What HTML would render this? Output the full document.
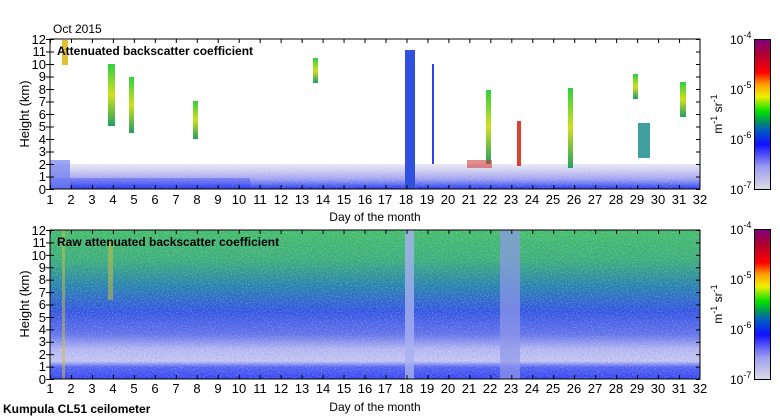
<!DOCTYPE html>
<html><head><meta charset="utf-8"><style>
html,body{margin:0;padding:0;background:#fff;}
svg{display:block;font-family:"Liberation Sans",sans-serif;}
</style></head><body>
<svg width="780" height="420" viewBox="0 0 780 420" xmlns="http://www.w3.org/2000/svg">
<defs>
<linearGradient id="cb" x1="0" y1="1" x2="0" y2="0">
<stop offset="0" stop-color="#dcdce6"/><stop offset="0.15" stop-color="#9c9cf0"/>
<stop offset="0.3" stop-color="#1010ff"/><stop offset="0.4" stop-color="#0060c0"/>
<stop offset="0.45" stop-color="#009060"/><stop offset="0.52" stop-color="#00e000"/>
<stop offset="0.62" stop-color="#f0f000"/><stop offset="0.7" stop-color="#ffa000"/>
<stop offset="0.78" stop-color="#ff0000"/><stop offset="0.9" stop-color="#b00030"/>
<stop offset="1" stop-color="#800080"/></linearGradient>
<linearGradient id="band" x1="0" y1="0" x2="0" y2="1">
<stop offset="0" stop-color="#e8e8f4"/><stop offset="0.3" stop-color="#c8c8f0"/>
<stop offset="0.6" stop-color="#a0a0f0"/><stop offset="0.8" stop-color="#6070f0"/><stop offset="1" stop-color="#2030f0"/></linearGradient>
<linearGradient id="raw" x1="0" y1="0" x2="0" y2="1">
<stop offset="0" stop-color="#40c060"/><stop offset="0.2" stop-color="#38b070"/>
<stop offset="0.38" stop-color="#2080a8"/><stop offset="0.55" stop-color="#3050e0"/>
<stop offset="0.7" stop-color="#6070e8"/><stop offset="0.8" stop-color="#b8b8f0"/>
<stop offset="0.88" stop-color="#c8c8f0"/><stop offset="0.92" stop-color="#5060f0"/>
<stop offset="1" stop-color="#3040f0"/></linearGradient>
<linearGradient id="cl" x1="0" y1="0" x2="0" y2="1">
<stop offset="0" stop-color="#30d040"/><stop offset="0.5" stop-color="#d0e020"/><stop offset="1" stop-color="#20a060"/></linearGradient>
<pattern id="xt" x="50" y="0" width="20.968" height="420" patternUnits="userSpaceOnUse"><rect x="0" y="0" width="1" height="420" fill="#000"/></pattern>
<pattern id="yt" x="0" y="39" width="780" height="12.5" patternUnits="userSpaceOnUse"><rect x="0" y="0" width="780" height="1" fill="#000"/></pattern>
<pattern id="yt2" x="0" y="230" width="780" height="12.42" patternUnits="userSpaceOnUse"><rect x="0" y="0" width="780" height="1" fill="#000"/></pattern>
<filter id="nz" x="0" y="0" width="1" height="1"><feTurbulence type="fractalNoise" baseFrequency="0.8" numOctaves="1" seed="3"/><feColorMatrix values="0 0 0 0 1  0 0 0 0 1  0 0 0 0 1  0 0 0 2 -0.9"/></filter>
<filter id="nz2" x="0" y="0" width="1" height="1"><feTurbulence type="fractalNoise" baseFrequency="0.7" numOctaves="1" seed="9"/><feColorMatrix values="0 0 0 0 0.1  0 0 0 0 0.2  0 0 0 0 1  0 0 0 2 -0.9"/></filter>
</defs>

<text x="53" y="33" font-size="12">Oct 2015</text>

<!-- TOP PLOT -->
<rect x="50" y="164" width="650" height="25" fill="url(#band)"/>
<rect x="50" y="164" width="650" height="25" filter="url(#nz)" opacity="0.4"/>
<rect x="50" y="178" width="200" height="11" fill="#3040f0" opacity="0.35"/>
<rect x="50" y="160" width="20" height="29" fill="#7080f0" opacity="0.7"/>
<rect x="108" y="64" width="7" height="62" fill="url(#cl)"/>
<rect x="129" y="77" width="5" height="56" fill="url(#cl)"/>
<rect x="193" y="101" width="5" height="38" fill="url(#cl)"/>
<rect x="313" y="58" width="5" height="25" fill="url(#cl)"/>
<rect x="62" y="40" width="6" height="25" fill="#e0c030"/>
<rect x="405" y="50" width="10" height="139" fill="#3050e0"/>
<rect x="432" y="64" width="2" height="100" fill="#3040f0"/>
<rect x="486" y="90" width="5" height="74" fill="url(#cl)"/>
<rect x="517" y="121" width="4" height="45" fill="#e04030"/>
<rect x="568" y="88" width="5" height="80" fill="url(#cl)"/>
<rect x="633" y="74" width="5" height="25" fill="url(#cl)"/>
<rect x="638" y="123" width="12" height="35" fill="#40a0a0"/>
<rect x="680" y="82" width="6" height="35" fill="url(#cl)"/>
<rect x="467" y="160" width="25" height="8" fill="#d04040" opacity="0.6"/>
<rect x="50" y="39" width="650" height="150" fill="none" stroke="#000" stroke-width="1"/>
<rect x="50" y="39" width="650" height="4" fill="url(#xt)"/>
<rect x="50" y="185" width="650" height="4" fill="url(#xt)"/>
<rect x="46" y="39" width="8" height="151" fill="url(#yt)"/>
<rect x="696" y="39" width="4" height="151" fill="url(#yt)"/>
<text x="57" y="55" font-size="12" font-weight="bold">Attenuated backscatter coefficient</text>

<!-- BOTTOM PLOT -->
<rect x="50" y="230" width="650" height="149" fill="url(#raw)"/>
<rect x="50" y="230" width="650" height="149" filter="url(#nz)" opacity="0.45"/>
<rect x="50" y="230" width="650" height="149" filter="url(#nz2)" opacity="0.45"/>
<rect x="405" y="230" width="9" height="149" fill="#a8b0f0" opacity="0.8"/>
<rect x="500" y="230" width="20" height="149" fill="#9098e8" opacity="0.7"/>
<rect x="108" y="240" width="5" height="60" fill="#d0c040" opacity="0.5"/>
<rect x="62" y="230" width="3" height="149" fill="#d0c040" opacity="0.5"/>
<rect x="50" y="230" width="650" height="149" fill="none" stroke="#000"/>
<rect x="50" y="230" width="650" height="4" fill="url(#xt)"/>
<rect x="50" y="375" width="650" height="4" fill="url(#xt)"/>
<rect x="46" y="230" width="8" height="150" fill="url(#yt2)"/>
<rect x="696" y="230" width="4" height="150" fill="url(#yt2)"/>
<text x="57" y="246" font-size="12" font-weight="bold">Raw attenuated backscatter coefficient</text>

<!-- y labels -->
<g font-size="13" text-anchor="end">
<text x="46" y="44">12</text><text x="46" y="56">11</text><text x="46" y="69">10</text><text x="46" y="81">9</text><text x="46" y="94">8</text><text x="46" y="106">7</text><text x="46" y="119">6</text><text x="46" y="131">5</text><text x="46" y="144">4</text><text x="46" y="156">3</text><text x="46" y="169">2</text><text x="46" y="181">1</text><text x="46" y="194">0</text>
<text x="46" y="235">12</text><text x="46" y="247">11</text><text x="46" y="260">10</text><text x="46" y="272">9</text><text x="46" y="284">8</text><text x="46" y="297">7</text><text x="46" y="309">6</text><text x="46" y="322">5</text><text x="46" y="334">4</text><text x="46" y="346">3</text><text x="46" y="359">2</text><text x="46" y="371">1</text><text x="46" y="384">0</text>
</g>
<text font-size="13" transform="translate(29,114) rotate(-90)" text-anchor="middle">Height (km)</text>
<text font-size="13" transform="translate(29,304) rotate(-90)" text-anchor="middle">Height (km)</text>

<!-- x labels -->
<g font-size="13" text-anchor="middle">
<text x="50" y="204">1</text><text x="71" y="204">2</text><text x="92" y="204">3</text><text x="113" y="204">4</text><text x="134" y="204">5</text><text x="155" y="204">6</text><text x="176" y="204">7</text><text x="197" y="204">8</text><text x="218" y="204">9</text><text x="239" y="204">10</text><text x="260" y="204">11</text><text x="281" y="204">12</text><text x="302" y="204">13</text><text x="323" y="204">14</text><text x="344" y="204">15</text><text x="365" y="204">16</text><text x="385" y="204">17</text><text x="406" y="204">18</text><text x="427" y="204">19</text><text x="448" y="204">20</text><text x="469" y="204">21</text><text x="490" y="204">22</text><text x="511" y="204">23</text><text x="532" y="204">24</text><text x="553" y="204">25</text><text x="574" y="204">26</text><text x="595" y="204">27</text><text x="616" y="204">28</text><text x="637" y="204">29</text><text x="658" y="204">30</text><text x="679" y="204">31</text><text x="700" y="204">32</text>
</g>
<g font-size="13" text-anchor="middle" transform="translate(0,189)">
<text x="50" y="204">1</text><text x="71" y="204">2</text><text x="92" y="204">3</text><text x="113" y="204">4</text><text x="134" y="204">5</text><text x="155" y="204">6</text><text x="176" y="204">7</text><text x="197" y="204">8</text><text x="218" y="204">9</text><text x="239" y="204">10</text><text x="260" y="204">11</text><text x="281" y="204">12</text><text x="302" y="204">13</text><text x="323" y="204">14</text><text x="344" y="204">15</text><text x="365" y="204">16</text><text x="385" y="204">17</text><text x="406" y="204">18</text><text x="427" y="204">19</text><text x="448" y="204">20</text><text x="469" y="204">21</text><text x="490" y="204">22</text><text x="511" y="204">23</text><text x="532" y="204">24</text><text x="553" y="204">25</text><text x="574" y="204">26</text><text x="595" y="204">27</text><text x="616" y="204">28</text><text x="637" y="204">29</text><text x="658" y="204">30</text><text x="679" y="204">31</text><text x="700" y="204">32</text>
</g>
<text x="375" y="221" font-size="12" text-anchor="middle">Day of the month</text>
<text x="375" y="411" font-size="12" text-anchor="middle">Day of the month</text>
<text x="3" y="413" font-size="12" font-weight="bold">Kumpula CL51 ceilometer</text>

<!-- colorbars -->
<rect x="754.5" y="39.5" width="16" height="150" fill="url(#cb)" stroke="#000"/>
<rect x="754.5" y="229.5" width="16" height="150" fill="url(#cb)" stroke="#000"/>
<g font-size="12">
<text x="730" y="44">10<tspan font-size="9" dy="-6">-4</tspan></text>
<text x="730" y="94">10<tspan font-size="9" dy="-6">-5</tspan></text>
<text x="730" y="144">10<tspan font-size="9" dy="-6">-6</tspan></text>
<text x="730" y="194">10<tspan font-size="9" dy="-6">-7</tspan></text>
<text x="730" y="234">10<tspan font-size="9" dy="-6">-4</tspan></text>
<text x="730" y="284">10<tspan font-size="9" dy="-6">-5</tspan></text>
<text x="730" y="334">10<tspan font-size="9" dy="-6">-6</tspan></text>
<text x="730" y="384">10<tspan font-size="9" dy="-6">-7</tspan></text>
</g>
<text font-size="12" transform="translate(722,114) rotate(-90)" text-anchor="middle">m<tspan font-size="9" dy="-5">-1</tspan><tspan dy="5"> sr</tspan><tspan font-size="9" dy="-5">-1</tspan></text>
<text font-size="12" transform="translate(722,304) rotate(-90)" text-anchor="middle">m<tspan font-size="9" dy="-5">-1</tspan><tspan dy="5"> sr</tspan><tspan font-size="9" dy="-5">-1</tspan></text>
</svg>
</body></html>
